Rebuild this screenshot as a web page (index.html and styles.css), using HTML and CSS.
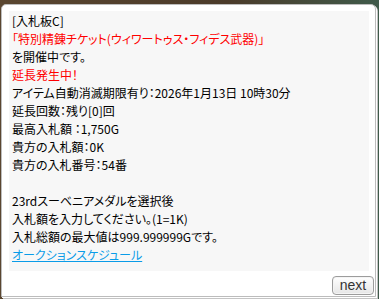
FILE: index.html
```html
<!DOCTYPE html>
<html lang="ja">

<head>
    <meta charset="UTF-8">
    <title>入札板</title>
    <link rel="stylesheet" href="styles.css">
</head>

<body>
    <div class="window">
        <div class="message">
            <p>[入札板C]</p>
            <p class="red">「特別精錬チケット(ウィワートゥス・フィデス武器)」</p>
            <p>を開催中です。</p>
            <p class="red">延長発生中！</p>
            <p>アイテム自動消滅期限有り：2026年1月13日 10時30分</p>
            <p>延長回数：残り[0]回</p>
            <p>最高入札額 ：1,750G</p>
            <p>貴方の入札額：0K</p>
            <p>貴方の入札番号：54番</p>
            <p>&nbsp;</p>
            <p>23rdスーベニアメダルを選択後</p>
            <p>入札額を入力してください。(1=1K)</p>
            <p>入札総額の最大値は999.999999Gです。</p>
            <p><a href="#" class="link">オークションスケジュール</a></p>
        </div>
        <div class="buttons">
            <button class="next">next</button>
        </div>
    </div>
</body>

</html>
```

FILE: styles.css
```css
body {
    margin: 0;
    height: 299px;
    overflow: hidden;
    background: linear-gradient(90deg, #5a4630 0%, #4b3b2a 60%, #3f5a4a 100%);
    font-family: "Noto Sans CJK JP", "Noto Sans", sans-serif;
}

.window {
    margin: 4px 0 0 1px;
    width: 373px;
    height: 291px;
    background-color: #fff;
    border: 1px solid #bcbcbc;
    border-radius: 5px 5px 0 0;
    box-shadow: 1px 1px 0 #fff, 2px 2px 0 #c4c4c4;
}

.message {
    margin: 6px 0 0 7px;
    width: 357px;
    height: 259px;
    padding: 1px 0 0 3px;
    background-color: #f7f7f7;
    font-size: 12px;
    line-height: 18px;
    color: #000;
    font-feature-settings: "palt";
}

.message p {
    margin: 0;
    white-space: nowrap;
}

.message .red {
    color: #ff0000;
}

.message .link {
    color: #0a9ce8;
    text-decoration: underline;
}

.buttons {
    display: flex;
    justify-content: flex-end;
    padding: 5px 1px 0 0;
}

.next {
    width: 42px;
    height: 19px;
    padding: 0 0 1px 0;
    border: 1px solid #9c9c9c;
    border-radius: 4px;
    background: linear-gradient(#ffffff, #e6e6e6);
    box-shadow: inset 0 0 0 1px #f4f4f4;
    font-family: "Liberation Sans", Arial, sans-serif;
    font-size: 14px;
    color: #333;
    cursor: pointer;
}
```
